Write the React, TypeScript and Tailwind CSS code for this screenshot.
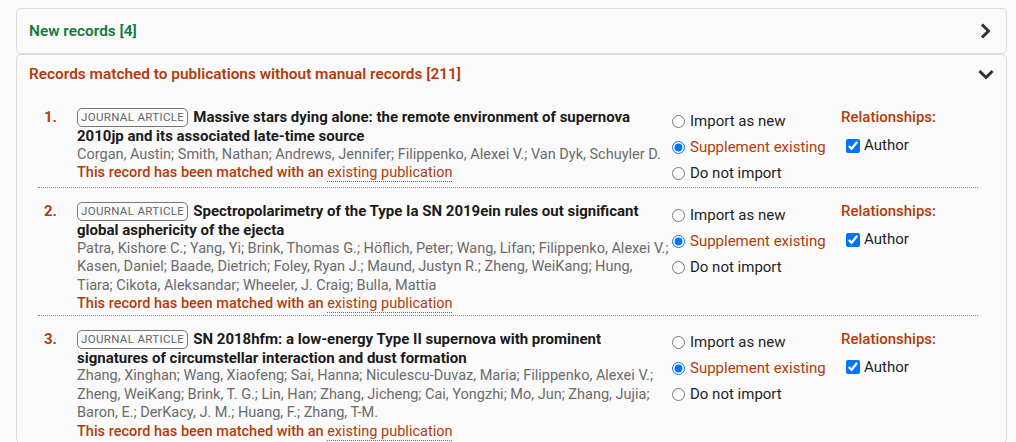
import React from "react";

const ORANGE = "text-[#b33c0b]";

type Item = { n: number; title: string; authors: string };

const items: Item[] = [
  {
    n: 1,
    title:
      "Massive stars dying alone: the remote environment of supernova 2010jp and its associated late-time source",
    authors:
      "Corgan, Austin; Smith, Nathan; Andrews, Jennifer; Filippenko, Alexei V.; Van Dyk, Schuyler D.",
  },
  {
    n: 2,
    title:
      "Spectropolarimetry of the Type Ia SN 2019ein rules out significant global asphericity of the ejecta",
    authors:
      "Patra, Kishore C.; Yang, Yi; Brink, Thomas G.; Höflich, Peter; Wang, Lifan; Filippenko, Alexei V.; Kasen, Daniel; Baade, Dietrich; Foley, Ryan J.; Maund, Justyn R.; Zheng, WeiKang; Hung, Tiara; Cikota, Aleksandar; Wheeler, J. Craig; Bulla, Mattia",
  },
  {
    n: 3,
    title:
      "SN 2018hfm: a low-energy Type II supernova with prominent signatures of circumstellar interaction and dust formation",
    authors:
      "Zhang, Xinghan; Wang, Xiaofeng; Sai, Hanna; Niculescu-Duvaz, Maria; Filippenko, Alexei V.; Zheng, WeiKang; Brink, T. G.; Lin, Han; Zhang, Jicheng; Cai, Yongzhi; Mo, Jun; Zhang, Jujia; Baron, E.; DerKacy, J. M.; Huang, F.; Zhang, T-M.",
  },
];

function ChevronRight() {
  return (
    <svg width="12" height="16" viewBox="0 0 12 16" fill="none">
      <path d="M3 2.5 L8.5 8 L3 13.5" stroke="#333" strokeWidth="3" strokeLinecap="square" />
    </svg>
  );
}

function ChevronDown() {
  return (
    <svg width="16" height="12" viewBox="0 0 16 12" fill="none">
      <path d="M2.5 3 L8 8.5 L13.5 3" stroke="#333" strokeWidth="3" strokeLinecap="square" />
    </svg>
  );
}

function Radio({ checked, label, name }: { checked?: boolean; label: string; name: string }) {
  return (
    <label className="flex h-[26px] items-center gap-[5px]">
      <input
        type="radio"
        name={name}
        defaultChecked={checked}
        className="m-0 h-[13px] w-[13px]"
      />
      <span className={checked ? ORANGE : "text-[#1f1f1f]"}>{label}</span>
    </label>
  );
}

function Row({ item }: { item: Item }) {
  const name = `r${item.n}`;
  return (
    <div className="flex border-b border-dotted border-[#8a8a8a] pb-[1px] pt-[14px]">
      <div className={`w-[39px] shrink-0 pl-[6px] font-bold ${ORANGE}`}>{item.n}.</div>
      <div className="w-[594px] shrink-0">
        <div className="font-bold text-[#1a1a1a]">
          <span className="mr-[5px] inline-block rounded-[5px] border border-[#777] px-[3px] align-[1px] text-[11.5px] font-normal leading-[17px] tracking-[0.35px] text-[#666]">
            JOURNAL ARTICLE
          </span>
          {item.title}
        </div>
        <div className="text-[14.5px] text-[#6b6b6b]">{item.authors}</div>
        <div className={`text-[14.5px] font-medium ${ORANGE}`}>
          This record has been matched with an{" "}
          <span className="border-b border-dotted border-[#666] font-normal">existing publication</span>
        </div>
      </div>
      <div className="ml-[1px] w-[169px] shrink-0">
        <Radio name={name} label="Import as new" />
        <Radio name={name} label="Supplement existing" checked />
        <Radio name={name} label="Do not import" />
      </div>
      <div className="flex-1">
        <div className={`font-medium ${ORANGE}`}>Relationships:</div>
        <label className="mt-[9px] flex h-[20px] items-center gap-[4px] pl-[5px] text-[#1f1f1f]">
          <input type="checkbox" defaultChecked className="m-0 h-[14px] w-[14px]" />
          Author
        </label>
      </div>
    </div>
  );
}

export default function App() {
  return (
    <div
      className="min-h-screen bg-[#fafafa] pt-[8px] text-[15px] leading-[18.5px]"
      style={{ fontFamily: "Roboto, 'Liberation Sans', sans-serif" }}
    >
      <div className="ml-[16px] w-[991px]">
        <div className="flex h-[46px] items-center justify-between rounded-[5px] border border-[#dcdcdc] bg-[#fafafa] pl-[12px] pr-[14px]">
          <span className="text-[15.4px] font-semibold text-[#127a3e]">New records [4]</span>
          <ChevronRight />
        </div>
        <div className="rounded-[5px] border border-[#dcdcdc] bg-[#fafafa]">
          <div className="flex h-[39px] items-center justify-between pl-[12px] pr-[12px]">
            <span className={`text-[15.4px] font-semibold ${ORANGE}`}>
              Records matched to publications without manual records [211]
            </span>
            <ChevronDown />
          </div>
          <div className="ml-[21px] mr-[28px]">
            {items.map((it) => (
              <Row key={it.n} item={it} />
            ))}
          </div>
        </div>
      </div>
    </div>
  );
}
